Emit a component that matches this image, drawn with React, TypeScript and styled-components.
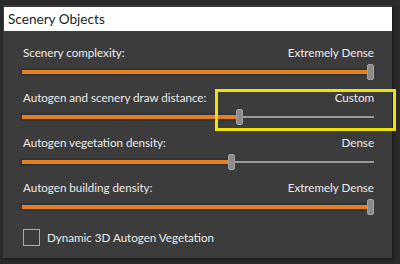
import React, { ReactElement } from 'react'
import styled, { createGlobalStyle } from 'styled-components'

type SliderRow = {
  label: string
  value: string
  pos: number
  highlight?: boolean
}

const rows: SliderRow[] = [
  { label: 'Scenery complexity:', value: 'Extremely Dense', pos: 1 },
  { label: 'Autogen and scenery draw distance:', value: 'Custom', pos: 0.62, highlight: true },
  { label: 'Autogen vegetation density:', value: 'Dense', pos: 0.597 },
  { label: 'Autogen building density:', value: 'Extremely Dense', pos: 1 },
]

const THUMB_W = 7

const App = (): ReactElement => {
  return (
    <>
      <GlobalStyle />
      <Panel>
        <Header>Scenery Objects</Header>
        <Body>
          {rows.map((r) => (
            <Row key={r.label}>
              <LabelLine>
                <span>{r.label}</span>
                <span>{r.value}</span>
              </LabelLine>
              <Slider>
                <Fill style={{ width: `calc(${r.pos} * (100% - ${THUMB_W}px) + 2px)` }} />
                <Rest />
                <Thumb style={{ left: `calc(${r.pos} * (100% - ${THUMB_W}px))` }} />
              </Slider>
              {r.highlight && <Highlight />}
            </Row>
          ))}
          <CheckRow>
            <Box />
            <span>Dynamic 3D Autogen Vegetation</span>
          </CheckRow>
        </Body>
      </Panel>
    </>
  )
}

const GlobalStyle = createGlobalStyle`
  html, body {
    margin: 0;
    padding: 0;
    background: #2a2a2a;
    width: 400px;
    height: 264px;
    overflow: hidden;
  }
  body {
    font-family: 'Lato', 'Liberation Sans', sans-serif;
  }
`

const Panel = styled.div`
  box-sizing: border-box;
  margin: 5px 0 0 3px;
  width: 389px;
  height: 253px;
  background: #3c3c3c;
  padding-top: 2px;
  box-shadow: 2px 2px 3px rgba(0, 0, 0, 0.35);
`

const Header = styled.div`
  height: 24px;
  margin-left: 1px;
  background: #ffffff;
  color: #1e1e1e;
  font-size: 13.6px;
  line-height: 25px;
  padding-left: 4px;
`

const Body = styled.div`
  display: flex;
  flex-direction: column;
  gap: 10px;
  padding: 14px 18px 0 19px;
`

const Row = styled.div`
  position: relative;
  display: flex;
  flex-direction: column;
  gap: 3px;
`

const LabelLine = styled.div`
  display: flex;
  justify-content: space-between;
  height: 16px;
  line-height: 16px;
  font-size: 11.6px;
  color: #ececec;
  padding-left: 1px;
`

const Slider = styled.div`
  position: relative;
  height: 16px;
  display: flex;
  align-items: center;
`

const Fill = styled.div`
  height: 4px;
  background: #e5801c;
  box-shadow: 0 0 0 2px #2f343a;
  flex: none;
`

const Rest = styled.div`
  flex: 1;
  height: 2px;
  background: #9a9a9a;
  border-right: 2px solid #9a9a9a;
`

const Thumb = styled.div`
  position: absolute;
  top: 0;
  box-sizing: border-box;
  width: ${THUMB_W}px;
  height: 16px;
  border-radius: 2px;
  background: #8c8c8c;
  border: 1px solid #a2a2a2;
`

const Highlight = styled.div`
  position: absolute;
  top: -1px;
  left: 193px;
  width: 181px;
  height: 42px;
  box-sizing: border-box;
  border: 3px solid #f2e200;
`

const CheckRow = styled.div`
  display: flex;
  align-items: center;
  gap: 7px;
  margin-top: 4px;
  font-size: 11.6px;
  color: #ececec;
  padding-left: 1px;
`

const Box = styled.div`
  width: 17px;
  height: 17px;
  box-sizing: border-box;
  border: 1px solid #a8a8a8;
`

export default App
